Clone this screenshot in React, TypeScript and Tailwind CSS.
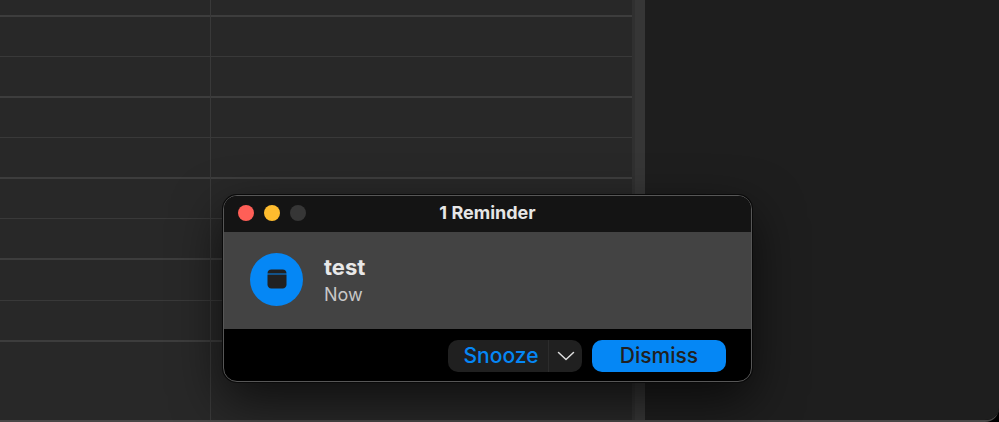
import clsx from 'clsx'

// calendar slots, half hours have the thinner divider
const slots = [
	{ height: 'h-[17px]', hour: true },
	{ height: 'h-10', hour: false },
	{ height: 'h-[41px]', hour: true },
	{ height: 'h-10', hour: false },
	{ height: 'h-[41px]', hour: true },
	{ height: 'h-10', hour: false },
	{ height: 'h-[41px]', hour: true },
	{ height: 'h-[41px]', hour: false },
	{ height: 'h-[41px]', hour: true }
]

function CalendarGrid() {
	return (
		<div className="flex flex-1 bg-[#282828]">
			<DayColumn className="w-[211px] border-r border-[#393939]" />
			<DayColumn className="flex-1" />
			<div className="w-[3px] bg-[#303030]" />
		</div>
	)
}

function DayColumn({ className }: { className?: string }) {
	return (
		<div className={className}>
			{slots.map((slot, index) => (
				<div
					key={index}
					className={clsx(
						slot.height,
						slot.hour ? 'border-b-2 border-[#3d3d3d]' : 'border-b border-[#393939]'
					)}
				/>
			))}
		</div>
	)
}

function TitleBar() {
	return (
		<header className="grid h-9 grid-cols-[1fr_auto_1fr] items-center bg-[#141414] px-3.5 pb-0.5">
			<div className="flex gap-2.5">
				<button type="button" aria-label="Close" className="size-4 rounded-full bg-[#ff5f57]" />
				<button type="button" aria-label="Minimize" className="size-4 rounded-full bg-[#febc2e]" />
				<button type="button" aria-label="Zoom" disabled className="size-4 rounded-full bg-[#363636]" />
			</div>
			<h1 className="text-lg/6 font-bold text-[#e6e6e6]">1 Reminder</h1>
		</header>
	)
}

function CalendarIcon() {
	return (
		<svg viewBox="0 0 20 20" className="size-5" fill="#212121" aria-hidden="true">
			<path d="M0.5 4.4C0.500 2 2 0.500 4.400 0.500h11.200c2.400 0 3.900 1.500 3.900 3.900z" />
			<path d="M0.500 5.600h19v10c0 2.400-1.500 3.900-3.900 3.900H4.400C2 19.500 0.500 18 0.500 15.600z" />
		</svg>
	)
}

function ReminderDialog() {
	return (
		<section className="absolute top-[195px] left-[223px] w-[529px] overflow-hidden rounded-[14px] border border-[#575757] bg-black shadow-[0_0_0_1px_#0a0a0a,0_18px_50px_rgba(0,0,0,0.65)]">
			<TitleBar />
			<div className="flex h-[97px] items-center gap-[21px] bg-[#434343] px-[26px] pb-[3px]">
				<div className="flex size-[53px] items-center justify-center rounded-full bg-[#0587f5]">
					<CalendarIcon />
				</div>
				<div>
					<h2 className="text-[22px]/8 font-bold text-[#e8e8e8]">test</h2>
					<p className="text-lg/6 text-[#c8c8c8]">Now</p>
				</div>
			</div>
			<footer className="flex justify-end gap-2.5 pt-[11px] pr-[25px] pb-[9px]">
				<div className="flex h-8 w-[134px] rounded-[10px] bg-[#202020]">
					<button type="button" className="flex-1 pl-1.5 text-[21px] font-medium text-[#0587f5]">
						Snooze
					</button>
					<button type="button" aria-label="Snooze options" className="flex w-[34px] items-center justify-center border-l border-[#2c2c2c]">
						<svg viewBox="0 0 18 10" className="h-2.5 w-[18px]" fill="none" stroke="#dddddd" strokeWidth="1.5" strokeLinecap="round" strokeLinejoin="round" aria-hidden="true">
							<path d="M1.500 1.500L9 8.500L16.500 1.500" />
						</svg>
					</button>
				</div>
				<button type="button" className="h-8 w-[134px] rounded-[10px] bg-[#0587f5] text-[21px] font-medium text-[#202020]">
					Dismiss
				</button>
			</footer>
		</section>
	)
}

export default function App() {
	return (
		<div className="relative min-h-screen overflow-hidden bg-black font-['Inter','Liberation_Sans',sans-serif]">
			<main className="flex h-screen overflow-hidden rounded-br-[14px] border-b-2 border-[#494747]">
				<CalendarGrid />
				<div className="w-2.5 bg-[#363636]" />
				<aside className="w-[354px] bg-[#1e1e1e]" />
			</main>
			<ReminderDialog />
		</div>
	)
}
